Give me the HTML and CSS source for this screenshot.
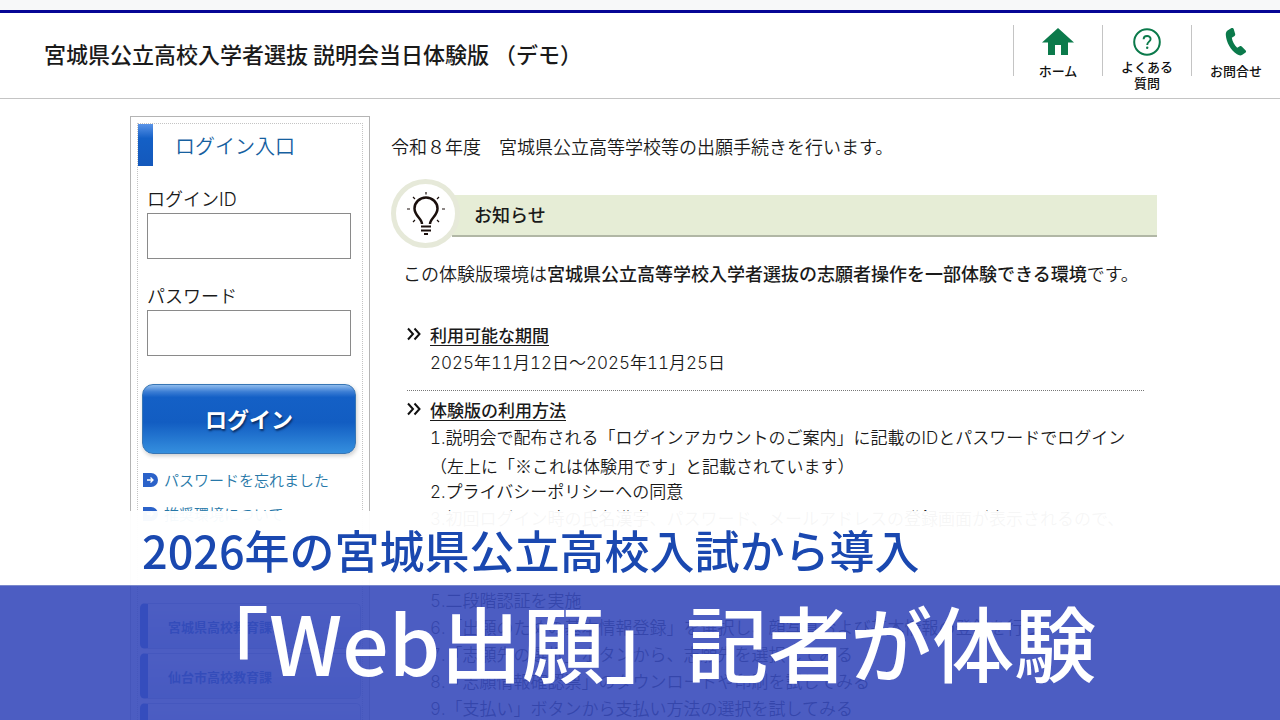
FILE: index.html
```html
<!DOCTYPE html>
<html lang="ja">
<head>
    <meta charset="UTF-8">
    <meta name="viewport" content="width=device-width, initial-scale=1.0">
    <title>宮城県公立高校入学者選抜</title>
    <link rel="stylesheet" href="styles.css">
</head>
<body>
    <div class="top-strip"></div>

    <header class="header">
        <h1 class="site-title">宮城県公立高校入学者選抜 説明会当日体験版 （デモ）</h1>
        <nav class="nav">
            <a class="nav-item" href="#">
                <svg class="nav-icon" viewBox="0 0 32 28">
                    <path d="M16 0 L32 14.500 H26 V27 H19 V17 H13 V27 H6 V14.500 H0 Z" fill="#0b7a4b"/>
                </svg>
                <span>ホーム</span>
            </a>
            <a class="nav-item two-line" href="#">
                <svg class="nav-icon" viewBox="0 0 32 28">
                    <circle cx="16" cy="14" r="12.800" fill="none" stroke="#0b7a4b" stroke-width="2"/>
                    <path d="M12.600 11.300 C12.600 6.900 19.600 6.900 19.600 11 C19.600 13.600 16.200 13.800 16.200 17" fill="none" stroke="#0b7a4b" stroke-width="1.900"/>
                    <circle cx="16.200" cy="19.800" r="1.200" fill="#0b7a4b"/>
                </svg>
                <span>よくある<br>質問</span>
            </a>
            <a class="nav-item" href="#">
                <svg class="nav-icon" viewBox="0 0 32 28">
                    <path d="M7.500 2.500 L11.500 0 C12.600 -0.400 13.400 0.200 13.700 1 L15.200 6 C15.400 7 15 7.800 14.200 8.300 L11.800 9.800 C12.400 13.400 14.200 17 17.200 19.800 L19.800 18.300 C20.600 17.900 21.400 18.100 22 18.700 L25.700 22.400 C26.300 23.200 26.200 24 25.600 24.600 L22 27 C20.600 27.800 18.800 27.500 17 26.300 C10.500 21.700 6.400 14.500 5.800 7 C5.700 5 6.200 3.400 7.500 2.500 Z" fill="#0b7a4b"/>
                </svg>
                <span>お問合せ</span>
            </a>
        </nav>
    </header>

    <div class="container">
        <aside class="sidebar">
            <div class="sidebar-inner">
                <h2 class="login-title">ログイン入口</h2>
                <form class="login-form">
                    <label for="login-id">ログインID</label>
                    <input type="text" id="login-id">
                    <label for="password">パスワード</label>
                    <input type="password" id="password">
                    <button type="button" class="login-btn">ログイン</button>
                </form>
                <ul class="side-links">
                    <li>
                        <svg class="link-icon" viewBox="0 0 15 14">
                            <path d="M0 0 H8 A7 7 0 0 1 8 14 H0 Z" fill="#2b62c9"/>
                            <path d="M4 7 H10 M7.500 4.500 L10 7 L7.500 9.500" fill="none" stroke="#fff" stroke-width="1.300"/>
                        </svg>
                        <a href="#">パスワードを忘れました</a>
                    </li>
                    <li>
                        <svg class="link-icon" viewBox="0 0 15 14">
                            <path d="M0 0 H8 A7 7 0 0 1 8 14 H0 Z" fill="#2b62c9"/>
                            <path d="M4 7 H10 M7.500 4.500 L10 7 L7.500 9.500" fill="none" stroke="#fff" stroke-width="1.300"/>
                        </svg>
                        <a href="#">推奨環境について</a>
                    </li>
                </ul>
                <div class="office-list">
                    <a class="office" href="#">宮城県高校教育課</a>
                    <a class="office" href="#">仙台市高校教育課</a>
                    <a class="office" href="#"></a>
                </div>
            </div>
        </aside>

        <main class="main">
            <p class="intro">令和８年度　宮城県公立高等学校等の出願手続きを行います。</p>

            <div class="notice">
                <div class="notice-icon">
                    <svg viewBox="0 0 40 44">
                        <path d="M16 32 C16 26.500 8.500 24 8.500 16.500 A11.500 11 0 0 1 31.500 16.500 C31.500 24 24 26.500 24 32" fill="none" stroke="#1a0f0c" stroke-width="2.500"/>
                        <path d="M15 34.500 H25 M15 38.500 H25 M18 42 H22" stroke="#1a0f0c" stroke-width="2"/>
                        <path d="M20 0 V2.500 M7 5 L9 7 M33 5 L31 7 M1 17 H4 M36 17 H39 M7 30 L9 28 M33 30 L31 28" stroke="#1a0f0c" stroke-width="1.200"/>
                    </svg>
                </div>
                <h2 class="notice-title">お知らせ</h2>
            </div>

            <p class="lead">この体験版環境は<strong>宮城県公立高等学校入学者選抜の志願者操作を一部体験できる環境</strong>です。</p>

            <section class="topic">
                <svg class="chevron" viewBox="0 0 14 14">
                    <path d="M1 1.500 L6 7 L1 12.500 M7.500 1.500 L12.500 7 L7.500 12.500" fill="none" stroke="#111" stroke-width="2"/>
                </svg>
                <div>
                    <h3>利用可能な期間</h3>
                    <p>2025年11月12日〜2025年11月25日</p>
                </div>
            </section>

            <section class="topic">
                <svg class="chevron" viewBox="0 0 14 14">
                    <path d="M1 1.500 L6 7 L1 12.500 M7.500 1.500 L12.500 7 L7.500 12.500" fill="none" stroke="#111" stroke-width="2"/>
                </svg>
                <div>
                    <h3>体験版の利用方法</h3>
                    <p>1.説明会で配布される「ログインアカウントのご案内」に記載のIDとパスワードでログイン</p>
                    <p class="sub-note">（左上に「※これは体験用です」と記載されています）</p>
                    <p>2.プライバシーポリシーへの同意</p>
                    <p>3.初回ログイン時の氏名漢字、パスワード、メールアドレスの登録画面が表示されるので、</p>
                    <div class="later-steps">
                        <p>5.二段階認証を実施</p>
                        <p>6.「出願のための基本情報登録」を選択し、顔写真および基本情報の登録を行う</p>
                        <p>7.「志願先の選択」ボタンから、志願先を選択してみる</p>
                        <p>8.「志願情報確認票」のダウンロードや印刷を試してみる</p>
                        <p>9.「支払い」ボタンから支払い方法の選択を試してみる</p>
                    </div>
                </div>
            </section>
        </main>
    </div>

    <!-- caption over the page -->
    <div class="caption">
        <div class="caption-sub">2026年の宮城県公立高校入試から導入</div>
        <div class="caption-main">「Web出願」記者が体験</div>
    </div>
</body>
</html>
```
FILE: styles.css
```css
* {
    box-sizing: border-box;
}

body {
    font-family: Inter, "Noto Sans CJK JP", sans-serif;
    font-weight: 350;
    font-size: 17px;
    font-variant-numeric: tabular-nums;
    line-height: 27px;
    color: #1a1a1a;
    background: #fff;
    margin: 0;
    height: 100vh;
    overflow: hidden;
    display: flex;
    flex-direction: column;
}

h1, h2, h3, p, ul {
    margin: 0;
    padding: 0;
}

a {
    text-decoration: none;
}

.top-strip {
    flex: none;
    height: 13px;
    background: #f7f8f9;
    border-bottom: 3px solid #060695;
}

.header {
    flex: none;
    display: flex;
    justify-content: space-between;
    height: 86px;
    padding: 12px 0 0 44px;
    border-bottom: 1px solid #c4c4c4;
}

.site-title {
    font-family: "Noto Sans CJK JP", sans-serif;
    font-size: 22px;
    font-weight: 500;
    line-height: 32px;
    padding-top: 12px;
}

.nav {
    display: flex;
}

.nav-item {
    display: flex;
    flex-direction: column;
    align-items: center;
    gap: 7px;
    width: 89px;
    height: 51px;
    padding-top: 3px;
    border-left: 1px solid #c4c4c4;
    font-size: 13px;
    font-weight: 500;
    line-height: 16px;
    text-align: center;
    color: #111;
}

.nav-item.two-line {
    gap: 3px;
}

.nav-icon {
    flex: none;
    width: 32px;
    height: 28px;
}

.container {
    flex: 1;
    min-height: 0;
    display: grid;
    grid-template-columns: 240px 1fr;
    gap: 21px;
    padding: 17px 123px 0 130px;
}

.sidebar {
    border: 1px solid #b4b4b4;
    border-bottom: none;
    padding: 6px 6px 0;
    overflow: hidden;
}

.sidebar-inner {
    height: 100%;
    border: 1px dotted #c4c4c4;
    border-bottom: none;
}

.login-title {
    height: 42px;
    padding-left: 22px;
    border-left: 15px solid #1460c6;
    border-image: linear-gradient(#5f97ea, #1460c6 35%, #1458bb) 1;
    border-image-width: 0 0 0 15px;
    font-size: 20px;
    font-weight: 350;
    line-height: 46px;
    color: #16609f;
}

.login-form {
    display: flex;
    flex-direction: column;
    padding: 20px 6px 0 4px;
}

.login-form label {
    font-size: 18px;
    padding-left: 5px;
}

.login-form input {
    height: 46px;
    margin: 0 5px 24px;
    padding: 0 8px;
    border: 1px solid #8a8a8a;
    background: #fff;
    font-size: 18px;
}

.login-btn {
    height: 70px;
    margin-top: 4px;
    padding-bottom: 4px;
    border: 1px solid #3876b4;
    border-radius: 11px;
    background: linear-gradient(#8fbcee, #3b7dd4 10%, #1460c6 18%, #125dc2 55%, #358fde);
    box-shadow: 1px 2px 4px rgba(0, 0, 0, 0.2);
    color: #fff;
    font-family: inherit;
    font-size: 22px;
    font-weight: 700;
    text-shadow: 1px 2px 2px #0a2f66;
}

.side-links {
    list-style: none;
    padding: 9px 0 0 5px;
}

.side-links li {
    display: flex;
    align-items: center;
    gap: 6px;
    height: 34px;
    font-size: 15px;
}

.side-links a {
    color: #2778a8;
}

.link-icon {
    width: 15px;
    height: 14px;
}

.office-list {
    display: flex;
    flex-direction: column;
    gap: 4px;
    padding: 72px 1px 0 2px;
}

.office {
    height: 46px;
    padding-left: 20px;
    border: 1px solid #b8c4d8;
    border-left: 8px solid #1460c6;
    border-radius: 5px;
    background: linear-gradient(#fff, #c9dcf2);
    font-size: 13px;
    font-weight: 700;
    line-height: 46px;
    color: #0a58b0;
}

.intro {
    font-size: 18px;
    padding: 18px 0;
}

.notice {
    display: flex;
    align-items: center;
}

.notice-icon {
    flex: none;
    display: flex;
    align-items: center;
    justify-content: center;
    width: 69px;
    height: 69px;
    border: 5px solid #e6e9d9;
    border-radius: 50%;
    background: #fff;
    z-index: 1;
}

.notice-icon svg {
    width: 40px;
    height: 44px;
}

.notice-title {
    flex: 1;
    height: 42px;
    margin: 4px 0 0 -8px;
    padding-left: 22px;
    background: #e6edd6;
    border-bottom: 2px solid #b1b7a5;
    font-size: 18px;
    font-weight: 500;
    line-height: 42px;
}

.lead {
    font-size: 18px;
    padding: 13px 12px 28px;
}

.lead strong {
    font-weight: 500;
}

.topic {
    display: flex;
    gap: 9px;
    margin: 0 13px 0 16px;
    padding: 7px 0 13px;
}

.topic + .topic {
    border-top: 1px dotted #777;
}

.topic > div {
    flex: 1;
    white-space: nowrap;
}

.topic h3 {
    font-size: 17px;
    font-weight: 500;
    text-decoration: underline;
    text-decoration-thickness: 1px;
    text-underline-offset: 3px;
}

.sub-note {
    font-family: "Noto Sans CJK JP", sans-serif;
}

.chevron {
    flex: none;
    width: 14px;
    height: 14px;
    margin-top: 4px;
}

.later-steps {
    padding-top: 55px;
}

.caption {
    position: fixed;
    left: 0;
    right: 0;
    bottom: 0;
    font-family: "Noto Sans CJK JP", sans-serif;
    white-space: nowrap;
}

.caption-sub {
    height: 74px;
    padding-left: 142px;
    background: rgba(255, 255, 255, 0.96);
    font-size: 45px;
    font-weight: 500;
    line-height: 78px;
    color: #1a48b0;
}

.caption-main {
    height: 135px;
    padding-left: 187px;
    background: rgba(57, 75, 187, 0.9);
    border-top: 1px solid #7a88cc;
    font-size: 82px;
    font-weight: 500;
    line-height: 110px;
    color: #fff;
}
```
